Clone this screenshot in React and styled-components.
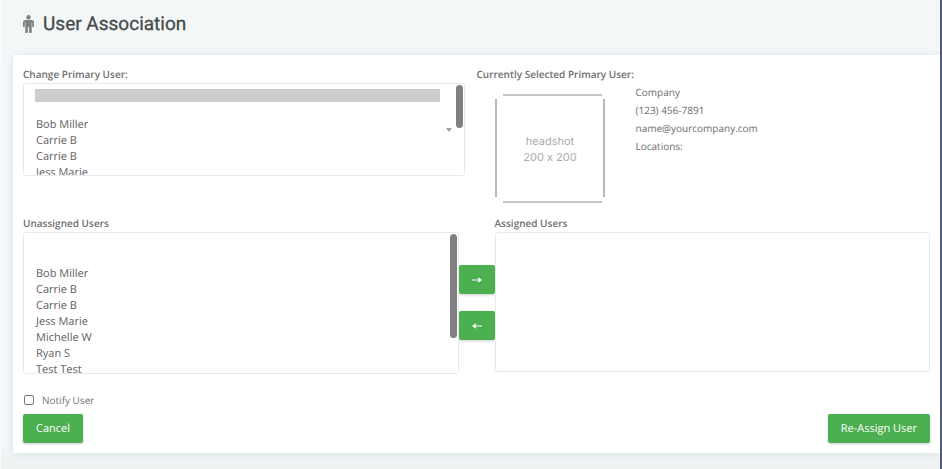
import React from "react";
import styled, { createGlobalStyle, css } from "styled-components";

const GlobalStyle = createGlobalStyle`
  *, *::before, *::after { box-sizing: border-box; }
  html { background: #f3f7f8; }
  body { margin: 0; font-family: "Open Sans", "Noto Sans", sans-serif; font-size: 10px; color: #6c6c6c; text-rendering: geometricPrecision; }
  select, option, button, input { text-rendering: inherit; }
`;

const Page = styled.main`
  min-height: 100vh;
  padding: 0 0 16px 12px;
  border-left: 1px solid #fbfcfd;
  border-right: 2px solid #545b78;
  background: linear-gradient(#f3f7f8 0, #f3f7f8 95%, #edf1f2 100%);
`;

const PageHeader = styled.header`
  display: flex;
  align-items: center;
  gap: 9px;
  height: 55px;
  padding: 0 0 7px 10px;
`;

const Title = styled.h1`
  margin: 0;
  font: 400 19px/24px Roboto, sans-serif;
  -webkit-text-stroke: 0.3px currentColor;
  color: #454a4b;
`;

const Card = styled.form`
  padding: 10px;
  background: #fff;
  box-shadow: 0 1px 8px rgba(90, 130, 150, 0.16);
`;

const PrimaryRow = styled.section`
  display: grid;
  grid-template-columns: 1fr 1fr;
  height: 149px;
`;

const PrimaryField = styled.div`
  padding-right: 12px;
`;

const FieldLabel = styled.label`
  display: block;
  height: 18px;
  font-weight: 600;
  line-height: 18px;
  color: #707070;
`;

const FieldTitle = styled(FieldLabel).attrs({ as: "h2" })`
  margin: 0;
  font-size: 10px;
`;

const ListFrame = styled.div`
  position: relative;
`;

const UserList = styled.select`
  display: block;
  width: 100%;
  height: ${(p) => p.$height}px;
  padding: ${(p) => p.$top || 0}px 24px 0 11px;
  border: 1px solid #e9e9e9;
  border-radius: 3px;
  outline: 0;
  overflow-y: auto;
  scrollbar-width: none;
  background: #fff;
  color: #606060;
  font: 11px/16px "Open Sans", "Noto Sans", sans-serif;
  &::-webkit-scrollbar { display: none; }
`;

const UserOption = styled.option`
  height: ${(p) => p.$height || 16}px;
  min-height: 0;
  padding: 0 1px;
  line-height: 16px;
  ${(p) =>
    p.$masked &&
    css`
      background: #ccc;
    `}
`;

const ScrollThumb = styled.span`
  position: absolute;
  top: 2px;
  right: 2px;
  width: 7px;
  height: ${(p) => p.$height}px;
  border-radius: 4px;
  background: #808080;
  pointer-events: none;
`;

const Caret = styled.span`
  position: absolute;
  top: 45px;
  right: 13px;
  border: 3px solid transparent;
  border-top: 4px solid #90a4ae;
  border-bottom: 0;
  pointer-events: none;
`;

const Profile = styled.div`
  display: flex;
  gap: 31px;
  padding-left: 18px;
`;

const Headshot = styled.svg`
  flex: none;
  width: 110px;
  height: 110px;
  margin-top: 10px;
  font: 11px Inter, sans-serif;
  font-feature-settings: "calt" 0;
`;

const Details = styled.address`
  font-style: normal;
  line-height: 18px;
`;

const DetailLine = styled.div`
  height: 18px;
`;

const Transfer = styled.section`
  display: grid;
  grid-template-columns: 1fr auto 1fr;
`;

const TransferButtons = styled.div`
  display: flex;
  flex-direction: column;
  gap: 17px;
  padding-top: 51px;
`;

const Button = styled.button`
  display: inline-flex;
  align-items: center;
  justify-content: center;
  height: 29px;
  padding: 0 13px;
  border: 0;
  border-radius: 2px;
  background: #4caf50;
  color: #fff;
  font: 11px/16px "Open Sans", "Noto Sans", sans-serif;
  box-shadow: 0 1px 3px rgba(0, 0, 0, 0.2);
  cursor: pointer;
`;

const NotifyLabel = styled.label`
  display: flex;
  align-items: center;
  gap: 8px;
  width: max-content;
  height: 18px;
  margin: 17px 0 5px;
  padding-left: 1px;
  color: #757575;
`;

const Checkbox = styled.input`
  appearance: none;
  width: 10px;
  height: 10px;
  margin: 0;
  border: 1px solid #767676;
  border-radius: 2px;
  background: #fff;
  &:checked { background: #4caf50; }
`;

const Actions = styled.footer`
  display: flex;
  justify-content: space-between;
`;

const PersonIcon = () => (
  <svg width="11" height="18" viewBox="0 0 11 18" fill="#808080" aria-hidden="true">
    <circle cx="5.5" cy="2.3" r="2.2" />
    <path d="M2.2 5h6.6a2.2 2.2 0 0 1 2.2 2.2v4.1a.9.9 0 0 1-1.8 0V7.5h-.5v9.4a1.2 1.2 0 0 1-2.6 0v-5h-1.2v5a1.2 1.2 0 0 1-2.6 0V7.5h-.5v3.8a.9.9 0 0 1-1.8 0V7.2A2.2 2.2 0 0 1 2.2 5z" />
  </svg>
);

const RightArrow = () => (
  <svg width="10" height="6" viewBox="0 0 10 6" fill="#fff" aria-hidden="true">
    <path d="M0 2.4h6.2V0.3L10 3 6.2 5.7V3.6H0z" />
  </svg>
);

const LeftArrow = () => (
  <svg width="10" height="6" viewBox="0 0 10 6" fill="#fff" aria-hidden="true">
    <path d="M10 2.4H3.8V0.3L0 3l3.8 2.7V3.6H10z" />
  </svg>
);

const users = ["Bob Miller", "Carrie B", "Carrie B", "Jess Marie", "Michelle W", "Ryan S", "Test Test"];

const UserOptions = () => users.map((name, i) => <UserOption key={i} value={i}>{name}</UserOption>);

export default function App() {
  return (
    <>
      <GlobalStyle />
      <Page>
        <PageHeader>
          <PersonIcon />
          <Title>User Association</Title>
        </PageHeader>
        <Card onSubmit={(e) => e.preventDefault()}>
          <PrimaryRow>
            <PrimaryField>
              <FieldLabel htmlFor="primary">Change Primary User:</FieldLabel>
              <ListFrame>
                <UserList id="primary" size={5} $height={93} $top={5}>
                  <UserOption value="current" $masked $height={13} />
                  <UserOption value="" $height={15} />
                  <UserOptions />
                </UserList>
                <Caret />
                <ScrollThumb $height={43} />
              </ListFrame>
            </PrimaryField>
            <div>
              <FieldTitle>Currently Selected Primary User:</FieldTitle>
              <Profile>
                <Headshot viewBox="0 0 110 110" role="img" aria-label="headshot 200 x 200">
                  <g fill="none" strokeWidth="2">
                    <path d="M8 2H107M8 109H107" stroke="#c6c6c6" />
                    <path d="M1 6V104M109 6V104" stroke="#b8b8b8" />
                  </g>
                  <g fill="#aaa" textAnchor="middle">
                    <text x="55" y="52">headshot</text>
                    <text x="55" y="68">200 x 200</text>
                  </g>
                </Headshot>
                <Details>
                  <DetailLine>Company</DetailLine>
                  <DetailLine>(123) 456-7891</DetailLine>
                  <DetailLine>name@yourcompany.com</DetailLine>
                  <DetailLine>Locations:</DetailLine>
                </Details>
              </Profile>
            </div>
          </PrimaryRow>
          <Transfer>
            <div>
              <FieldLabel htmlFor="unassigned">Unassigned Users</FieldLabel>
              <ListFrame>
                <UserList id="unassigned" multiple $height={142} $top={1}>
                  <UserOption value="current" />
                  <UserOption value="" />
                  <UserOptions />
                </UserList>
                <ScrollThumb $height={104} />
              </ListFrame>
            </div>
            <TransferButtons>
              <Button type="button" aria-label="Assign selected users"><RightArrow /></Button>
              <Button type="button" aria-label="Unassign selected users"><LeftArrow /></Button>
            </TransferButtons>
            <div>
              <FieldLabel htmlFor="assigned">Assigned Users</FieldLabel>
              <UserList id="assigned" multiple $height={140} />
            </div>
          </Transfer>
          <NotifyLabel>
            <Checkbox type="checkbox" />
            Notify User
          </NotifyLabel>
          <Actions>
            <Button type="button">Cancel</Button>
            <Button type="submit">Re-Assign User</Button>
          </Actions>
        </Card>
      </Page>
    </>
  );
}
